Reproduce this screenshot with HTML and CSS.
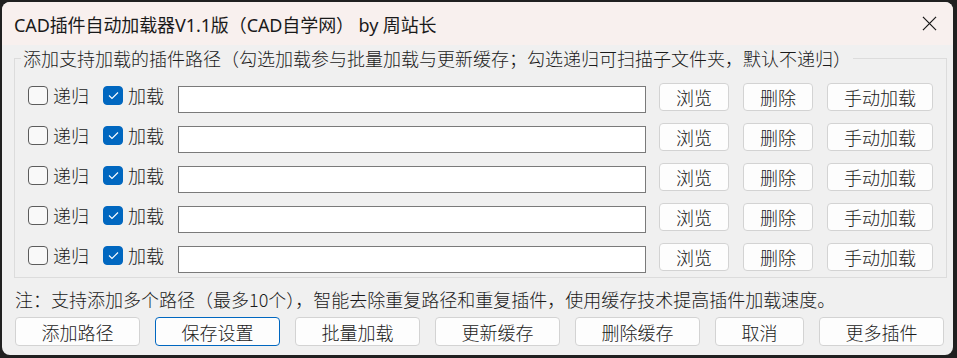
FILE: index.html
```html
<!DOCTYPE html>
<html lang="zh-CN">
<head>
  <meta charset="UTF-8">
  <title>CAD插件自动加载器</title>
  <link rel="stylesheet" href="styles.css">
</head>
<body>

  <div class="window">
    <div class="titlebar">
      <span class="title">CAD插件自动加载器V1.1版（CAD自学网） by 周站长</span>
      <svg class="close" width="16" height="16" viewBox="0 0 16 16">
        <path d="M1 1 L15 15 M15 1 L1 15" stroke="#1a1a1a" stroke-width="1.3" fill="none"/>
      </svg>
    </div>

    <div class="content">
      <fieldset class="group">
        <legend>添加支持加载的插件路径（勾选加载参与批量加载与更新缓存；勾选递归可扫描子文件夹，默认不递归）</legend>

        <div class="row">
          <span class="check"></span><span class="label">递归</span>
          <span class="check on"><svg width="11" height="9" viewBox="0 0 11 9"><path d="M1 4.5 L4 7.5 L10 1.5" stroke="#fff" stroke-width="1.1" fill="none"/></svg></span><span class="label">加载</span>
          <span class="path"></span>
          <button class="btn small">浏览</button>
          <button class="btn small">删除</button>
          <button class="btn wide">手动加载</button>
        </div>
        <div class="row">
          <span class="check"></span><span class="label">递归</span>
          <span class="check on"><svg width="11" height="9" viewBox="0 0 11 9"><path d="M1 4.5 L4 7.5 L10 1.5" stroke="#fff" stroke-width="1.1" fill="none"/></svg></span><span class="label">加载</span>
          <span class="path"></span>
          <button class="btn small">浏览</button>
          <button class="btn small">删除</button>
          <button class="btn wide">手动加载</button>
        </div>
        <div class="row">
          <span class="check"></span><span class="label">递归</span>
          <span class="check on"><svg width="11" height="9" viewBox="0 0 11 9"><path d="M1 4.5 L4 7.5 L10 1.5" stroke="#fff" stroke-width="1.1" fill="none"/></svg></span><span class="label">加载</span>
          <span class="path"></span>
          <button class="btn small">浏览</button>
          <button class="btn small">删除</button>
          <button class="btn wide">手动加载</button>
        </div>
        <div class="row">
          <span class="check"></span><span class="label">递归</span>
          <span class="check on"><svg width="11" height="9" viewBox="0 0 11 9"><path d="M1 4.5 L4 7.5 L10 1.5" stroke="#fff" stroke-width="1.1" fill="none"/></svg></span><span class="label">加载</span>
          <span class="path"></span>
          <button class="btn small">浏览</button>
          <button class="btn small">删除</button>
          <button class="btn wide">手动加载</button>
        </div>
        <div class="row">
          <span class="check"></span><span class="label">递归</span>
          <span class="check on"><svg width="11" height="9" viewBox="0 0 11 9"><path d="M1 4.5 L4 7.5 L10 1.5" stroke="#fff" stroke-width="1.1" fill="none"/></svg></span><span class="label">加载</span>
          <span class="path"></span>
          <button class="btn small">浏览</button>
          <button class="btn small">删除</button>
          <button class="btn wide">手动加载</button>
        </div>
      </fieldset>

      <div class="note">注：支持添加多个路径（最多10个），智能去除重复路径和重复插件，使用缓存技术提高插件加载速度。</div>

      <div class="actions">
        <button class="btn action">添加路径</button>
        <button class="btn action primary">保存设置</button>
        <button class="btn action">批量加载</button>
        <button class="btn action">更新缓存</button>
        <button class="btn action">删除缓存</button>
        <button class="btn action cancel">取消</button>
        <button class="btn action">更多插件</button>
      </div>
    </div>
  </div>

</body>
</html>
```

FILE: styles.css
```css
body {
  margin: 0;
  background: #202020;
  font-family: "Noto Sans CJK SC", "Noto Sans", sans-serif;
  color: #111;
}

.window {
  margin: 2px 0 0 2px;
  width: 951px;
  height: 353px;
  background: #f0f0f0;
  border-radius: 8px;
  overflow: hidden;
}

.titlebar {
  height: 43px;
  background: #f8f0ee;
  display: flex;
  align-items: center;
  justify-content: space-between;
  padding: 0 16px 0 12px;
  font-family: "Noto Sans", "Noto Sans CJK SC", sans-serif;
}

.title {
  font-size: 18px;
  color: #1a1a1a;
  letter-spacing: -0.1px;
}

.close {
  width: 15px;
  height: 15px;
}

.content {
  font-size: 18px;
  font-weight: 300;
}

.group {
  box-sizing: border-box;
  width: 933px;
  margin: 2px 0 0 12px;
  padding: 14px 13px 4px 13px;
  border: 1px solid #dcdcdc;
  min-width: 0;
}

.group legend {
  line-height: 22px;
  padding: 0 2px;
  margin-left: -7px;
  color: #1a1a1a;
}

.row {
  display: flex;
  align-items: flex-start;
  height: 30px;
  margin-bottom: 10px;
}

.row:last-child {
  margin-bottom: 0;
}

.check {
  box-sizing: border-box;
  width: 20px;
  height: 19px;
  margin-top: 3px;
  border: 1px solid #5c5c5c;
  border-radius: 4px;
  background: #f9f9f9;
  display: flex;
  align-items: center;
  justify-content: center;
}

.check.on {
  background: #0067c0;
  border-color: #0067c0;
  margin-left: 14px;
}

.label {
  margin-left: 5px;
  line-height: 24px;
  color: #1a1a1a;
}

.path {
  box-sizing: border-box;
  width: 468px;
  height: 27px;
  margin: 3px 0 0 14px;
  background: #fff;
  border: 1px solid #7a7a7a;
}

.btn {
  box-sizing: border-box;
  height: 28px;
  padding: 0;
  border: 1px solid #d3d3d3;
  border-radius: 4px;
  background: #fdfdfd;
  font-family: inherit;
  font-size: 18px;
  font-weight: 300;
  line-height: 24px;
  color: #1a1a1a;
}

.small {
  width: 70px;
  margin-left: 13px;
}

.small + .small {
  margin-left: 14px;
}

.wide {
  width: 106px;
  margin-left: 14px;
}

.note {
  margin: 9px 0 0 13px;
  line-height: 24px;
  color: #1a1a1a;
}

.actions {
  display: flex;
  gap: 15px;
  margin: 6px 0 0 13px;
}

.action {
  width: 125px;
  height: 29px;
}

.action.cancel {
  width: 89px;
}

.action.primary {
  border-color: #0067c0;
}
```
